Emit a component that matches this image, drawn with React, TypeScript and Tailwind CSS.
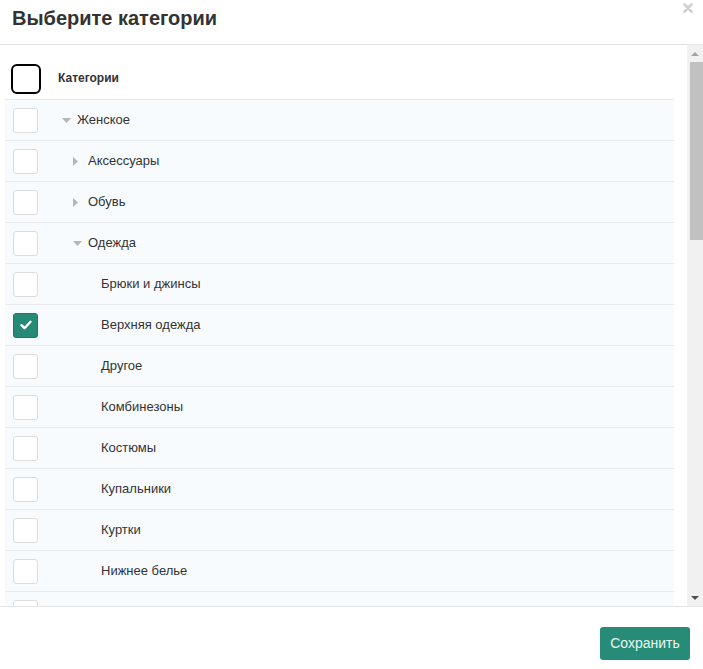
import React from 'react';

type Row = { label: string; level: number; caret?: 'down' | 'right'; checked?: boolean };

const rows: Row[] = [
  { label: 'Женское', level: 1, caret: 'down' },
  { label: 'Аксессуары', level: 2, caret: 'right' },
  { label: 'Обувь', level: 2, caret: 'right' },
  { label: 'Одежда', level: 2, caret: 'down' },
  { label: 'Брюки и джинсы', level: 3 },
  { label: 'Верхняя одежда', level: 3, checked: true },
  { label: 'Другое', level: 3 },
  { label: 'Комбинезоны', level: 3 },
  { label: 'Костюмы', level: 3 },
  { label: 'Купальники', level: 3 },
  { label: 'Куртки', level: 3 },
  { label: 'Нижнее белье', level: 3 },
  { label: '', level: 3 }, // следующая строка, видна только верхушка
];

const indent: Record<number, string> = { 1: 'pl-[4px]', 2: 'pl-[15px]', 3: 'pl-[28px]' };

const Caret = ({ dir }: { dir?: 'down' | 'right' }) => {
  if (!dir) return <span className="w-[15px] shrink-0" />;
  return (
    <span className="w-[15px] shrink-0 flex items-center">
      {dir === 'down' ? (
        <svg width="9" height="5" viewBox="0 0 9 5"><path d="M0 0h9L4.5 5z" fill="#b5b5b5" /></svg>
      ) : (
        <svg width="5" height="9" viewBox="0 0 5 9"><path d="M0 0v9l5-4.5z" fill="#b5b5b5" /></svg>
      )}
    </span>
  );
};

const Box = ({ checked }: { checked?: boolean }) =>
  checked ? (
    <div className="w-[25px] h-[25px] rounded-[3px] bg-[#268a76] border border-[#1f7a67] flex items-center justify-center">
      <svg width="12" height="10" viewBox="0 0 12 10">
        <path d="M1.5 5.2l3 3L10.5 1.8" stroke="#fff" strokeWidth="2.4" fill="none" strokeLinecap="round" strokeLinejoin="round" />
      </svg>
    </div>
  ) : (
    <div className="w-[25px] h-[25px] rounded-[3px] bg-white border border-[#dcdcdc]" />
  );

export default function App() {
  return (
    <div className="w-[703px] h-[669px] bg-white flex flex-col text-[#333] overflow-hidden" style={{ fontFamily: '"Liberation Sans", Arial, sans-serif' }}>
      <div className="h-[45px] shrink-0 border-b border-[#e5e5e5] flex items-start justify-between pl-[12px] pr-[10px]">
        <h1 className="text-[20px] font-bold leading-[36px] text-[#333]">Выберите категории</h1>
        <svg className="mt-[3px]" width="10" height="10" viewBox="0 0 10 10">
          <path d="M1.5 1.5l7 7M8.5 1.5l-7 7" stroke="#cfcfcf" strokeWidth="2.6" strokeLinecap="round" />
        </svg>
      </div>

      <div className="h-[561px] shrink-0 flex">
        <div className="flex-1 overflow-hidden pl-[5px] pt-[16px]">
          <div className="w-[669px]">
            <div className="h-[39px] flex items-start pt-[3px] border-b border-[#e8eaed]">
              <div className="w-[53px] pl-[6px] shrink-0">
                <div className="w-[30px] h-[30px] rounded-[6px] border-2 border-black bg-white" />
              </div>
              <span className="text-[12px] font-bold leading-[28px] text-[#333]">Категории</span>
            </div>
            {rows.map((r, i) => (
              <div key={i} className="h-[41px] flex items-center bg-[#f8fbfe] border-b border-[#e8eaed]">
                <div className="w-[53px] pl-[8px] shrink-0">
                  <Box checked={r.checked} />
                </div>
                <div className={`flex items-center text-[13px] ${indent[r.level]}`}>
                  <Caret dir={r.caret} />
                  <span>{r.label}</span>
                </div>
              </div>
            ))}
          </div>
        </div>

        <div className="w-[16px] shrink-0 bg-[#f1f1f1] flex flex-col items-center">
          <div className="h-[17px] w-full flex items-center justify-center">
            <svg width="8" height="4" viewBox="0 0 8 4"><path d="M0 4h8L4 0z" fill="#a3a3a3" /></svg>
          </div>
          <div className="w-[13px] ml-[2px] h-[178px] bg-[#c1c1c1]" />
          <div className="flex-1" />
          <div className="h-[17px] w-full flex items-center justify-center">
            <svg width="8" height="4" viewBox="0 0 8 4"><path d="M0 0h8L4 4z" fill="#505050" /></svg>
          </div>
        </div>
      </div>

      <div className="flex-1 border-t border-[#e5e5e5] flex items-start justify-end pr-[13px] pt-[20px]">
        <button className="w-[90px] h-[33px] rounded-[3px] bg-[#268c78] text-[#e9f6f2] text-[14px]">Сохранить</button>
      </div>
    </div>
  );
}
